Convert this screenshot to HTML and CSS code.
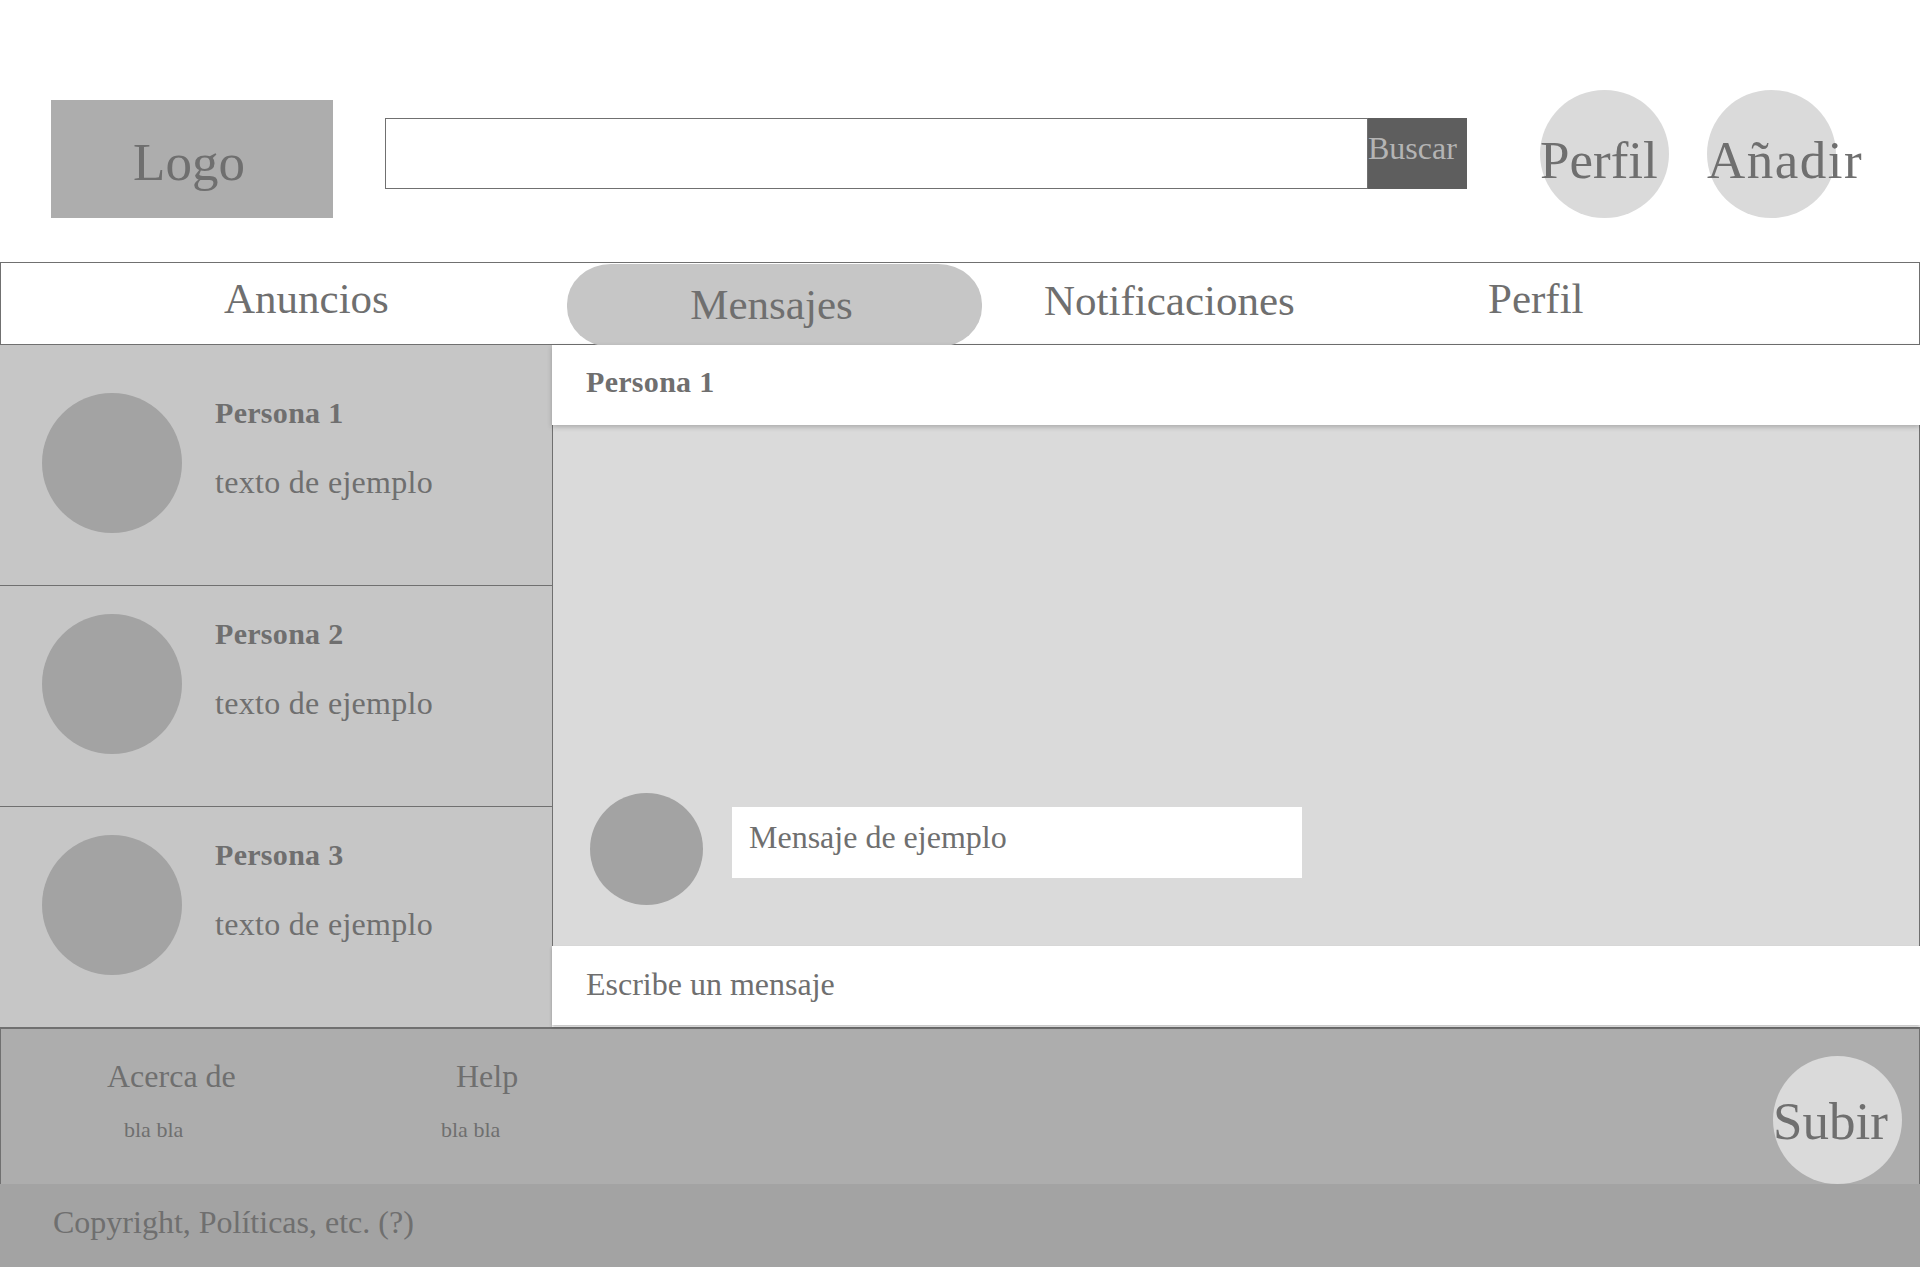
FILE: index.html
```html
<!DOCTYPE html>
<html lang="es">
<head>
<meta charset="utf-8">
<title>Mensajes</title>
<link rel="stylesheet" href="styles.css">
</head>
<body>
<header class="topbar">
  <div class="logo">Logo</div>
  <div class="search">
    <div class="search-input"></div>
    <div class="search-btn">Buscar</div>
  </div>
  <div class="round-btn perfil-btn">Perfil</div>
  <div class="round-btn anadir-btn">Añadir</div>
</header>

<nav class="tabs">
  <div class="tab tab-anuncios">Anuncios</div>
  <div class="tab-pill">Mensajes</div>
  <div class="tab tab-notif">Notificaciones</div>
  <div class="tab tab-perfil">Perfil</div>
</nav>

<main class="main">
  <aside class="sidebar">
    <div class="contact contact-first">
      <div class="avatar"></div>
      <div class="contact-text">
        <div class="contact-name">Persona 1</div>
        <div class="contact-preview">texto de ejemplo</div>
      </div>
    </div>
    <div class="contact">
      <div class="avatar"></div>
      <div class="contact-text">
        <div class="contact-name">Persona 2</div>
        <div class="contact-preview">texto de ejemplo</div>
      </div>
    </div>
    <div class="contact contact-last">
      <div class="avatar"></div>
      <div class="contact-text">
        <div class="contact-name">Persona 3</div>
        <div class="contact-preview">texto de ejemplo</div>
      </div>
    </div>
  </aside>

  <section class="chat">
    <div class="chat-header">Persona 1</div>
    <div class="chat-body">
      <div class="message">
        <div class="msg-avatar"></div>
        <div class="msg-bubble">Mensaje de ejemplo</div>
      </div>
    </div>
    <div class="chat-input">Escribe un mensaje</div>
  </section>
</main>

<footer class="footer">
  <div class="footer-links">
    <div class="footer-col col-about">
      <div class="footer-title">Acerca de</div>
      <div class="footer-small about-small">bla bla</div>
    </div>
    <div class="footer-col col-help">
      <div class="footer-title help-title">Help</div>
      <div class="footer-small">bla bla</div>
    </div>
    <div class="round-btn subir-btn">Subir</div>
  </div>
  <div class="copyright">Copyright, Políticas, etc. (?)</div>
</footer>
</body>
</html>
```
FILE: styles.css
```css
* {
  box-sizing: border-box;
}

html, body {
  margin: 0;
  padding: 0;
  background: #ffffff;
}

body {
  width: 1920px;
  font-family: "Liberation Serif", "DejaVu Serif", serif;
  color: #6f6f6f;
}

/* ---------- Top bar ---------- */
.topbar {
  display: flex;
  align-items: flex-start;
  height: 262px;
  padding-top: 90px;
}

.logo {
  width: 282px;
  height: 118px;
  margin-top: 10px;
  margin-left: 51px;
  background: #adadad;
  display: flex;
  align-items: center;
  justify-content: center;
  font-size: 53px;
  padding-top: 6px;
  padding-right: 6px;
}

.search {
  display: flex;
  margin-top: 28px;
  margin-left: 52px;
  height: 71px;
}

.search-input {
  width: 983px;
  height: 71px;
  border: 1px solid #707070;
  background: #ffffff;
}

.search-btn {
  width: 99px;
  height: 71px;
  background: #5e5e5e;
  color: #b4b4b4;
  font-size: 32px;
  line-height: 1;
  padding-top: 14px;
  white-space: nowrap;
}

.round-btn {
  width: 129px;
  height: 128px;
  border-radius: 50%;
  background: #dadada;
  font-size: 53px;
  line-height: 1;
  padding-top: 44px;
  white-space: nowrap;
  flex-shrink: 0;
}

.perfil-btn {
  margin-left: 73px;
}

.anadir-btn {
  margin-left: 38px;
  letter-spacing: 1.5px;
}

/* ---------- Tabs ---------- */
.tabs {
  display: flex;
  align-items: flex-start;
  height: 83px;
  border: 1px solid #707070;
  padding-left: 223px;
  font-size: 43px;
  line-height: 1;
}

.tab {
  margin-top: 14px;
  white-space: nowrap;
}

.tab-anuncios {
  width: 343px;
}

.tab-pill {
  width: 415px;
  height: 83px;
  margin-top: 1px;
  background: #c6c6c6;
  border-radius: 44px / 40px;
  display: flex;
  align-items: center;
  justify-content: center;
  padding-bottom: 2px;
  padding-right: 6px;
}

.tab-notif {
  margin-left: 62px;
  width: 444px;
  margin-top: 16px;
}

.tab-perfil {
  margin-top: 14px;
}

/* ---------- Main ---------- */
.main {
  display: grid;
  grid-template-columns: 552px 1fr;
  height: 682px;
}

.sidebar {
  background: #c6c6c6;
  display: flex;
  flex-direction: column;
}

.contact {
  display: flex;
  align-items: flex-start;
  padding: 28px 0 52px 42px;
  border-bottom: 1px solid #707070;
}

.contact-first {
  padding-top: 48px;
}

.contact-last {
  border-bottom: none;
}

.avatar {
  width: 140px;
  height: 140px;
  border-radius: 50%;
  background: #a3a3a3;
  flex-shrink: 0;
}

.contact-text {
  margin-left: 33px;
  padding-top: 5px;
}

.contact-name {
  font-size: 30px;
  font-weight: bold;
  line-height: 1;
  letter-spacing: 0.3px;
}

.contact-preview {
  font-size: 32px;
  line-height: 1;
  margin-top: 38px;
  letter-spacing: 0.3px;
}

.chat {
  display: flex;
  flex-direction: column;
}

.chat-header {
  position: relative;
  z-index: 1;
  height: 80px;
  background: #ffffff;
  box-shadow: 0 2px 5px rgba(0, 0, 0, 0.22);
  padding: 22px 0 0 34px;
  font-size: 30px;
  font-weight: bold;
  line-height: 1;
  letter-spacing: 0.3px;
}

.chat-body {
  flex: 1;
  background: #dadada;
  border-left: 1px solid #707070;
  border-right: 1px solid #707070;
  display: flex;
  flex-direction: column;
  justify-content: flex-end;
  padding: 0 0 41px 37px;
}

.message {
  display: flex;
  align-items: flex-start;
}

.msg-avatar {
  width: 113px;
  height: 112px;
  border-radius: 50%;
  background: #a3a3a3;
  flex-shrink: 0;
}

.msg-bubble {
  width: 570px;
  height: 71px;
  margin-top: 14px;
  margin-left: 29px;
  background: #ffffff;
  font-size: 32px;
  line-height: 1;
  padding: 14px 0 0 17px;
}

.chat-input {
  height: 79px;
  margin-bottom: 2px;
  background: #ffffff;
  box-shadow: 0 2px 3px rgba(0, 0, 0, 0.25);
  font-size: 32px;
  line-height: 1;
  padding: 22px 0 0 34px;
  position: relative;
}

/* ---------- Footer ---------- */
.footer-links {
  display: flex;
  align-items: flex-start;
  height: 157px;
  background: #adadad;
  border-top: 2px solid #707070;
  border-left: 1px solid #707070;
  border-right: 1px solid #707070;
}

.footer-col {
  padding-top: 31px;
}

.col-about {
  margin-left: 106px;
  width: 334px;
}

.footer-title {
  font-size: 32px;
  line-height: 1;
}

.help-title {
  padding-left: 15px;
}

.about-small {
  padding-left: 17px;
}

.footer-small {
  font-size: 22px;
  line-height: 1;
  margin-top: 27px;
}

.subir-btn {
  margin-left: auto;
  margin-right: 17px;
  margin-top: 27px;
  padding-top: 39px;
}

.copyright {
  height: 83px;
  background: #a3a3a3;
  font-size: 32px;
  line-height: 1;
  padding: 22px 0 0 53px;
}
```
